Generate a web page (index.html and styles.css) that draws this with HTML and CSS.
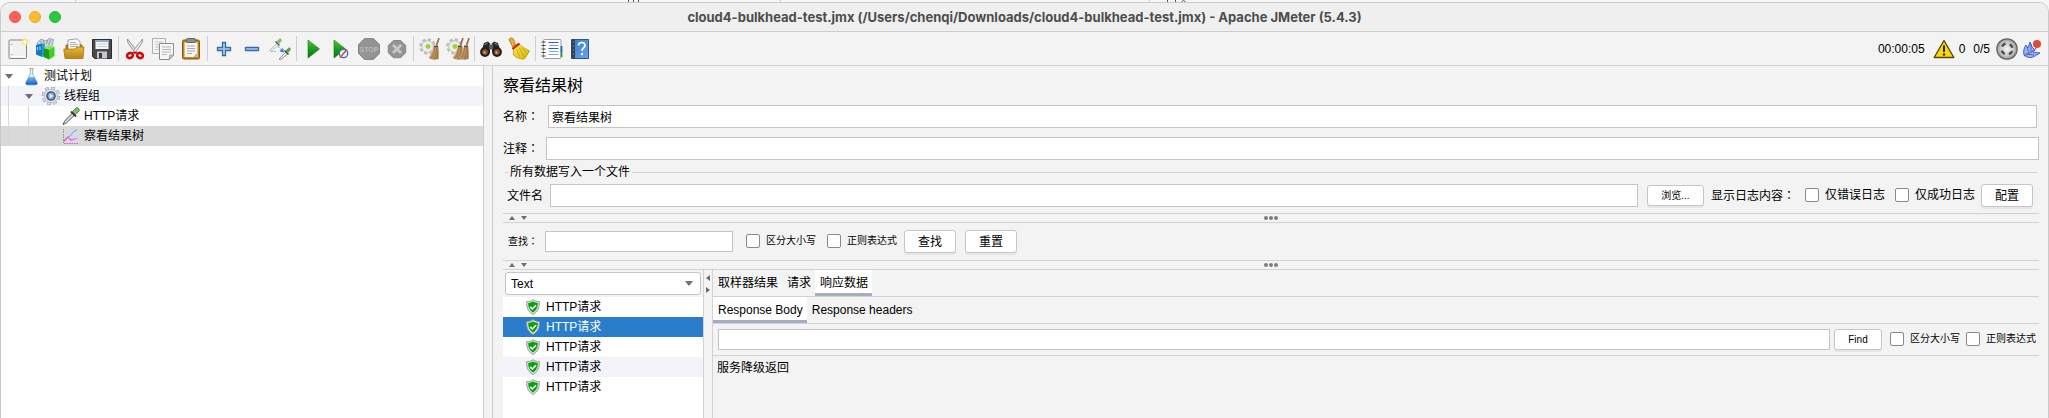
FILE: index.html
```html
<!DOCTYPE html>
<html lang="zh-CN">
<head>
<meta charset="utf-8">
<title>Apache JMeter (5.4.3)</title>
<link rel="stylesheet" href="styles.css">
</head>
<body>
<svg class="symbols" aria-hidden="true">
  <defs>
    <linearGradient id="gGreen" x1="0" y1="0" x2="0" y2="1"><stop offset="0" stop-color="#5fc648"/><stop offset=".5" stop-color="#1e9a1c"/><stop offset="1" stop-color="#0a7a10"/></linearGradient>
    <linearGradient id="gGold" x1="0" y1="0" x2="0" y2="1"><stop offset="0" stop-color="#e6b93a"/><stop offset="1" stop-color="#b98412"/></linearGradient>
    <linearGradient id="gBook" x1="0" y1="0" x2="1" y2="1"><stop offset="0" stop-color="#3a78c8"/><stop offset="1" stop-color="#6aa5ee"/></linearGradient>
    <linearGradient id="gFlask" x1="0" y1="0" x2="0" y2="1"><stop offset="0" stop-color="#7db8f4"/><stop offset="1" stop-color="#0b5fd2"/></linearGradient>
    <radialGradient id="gMetal"><stop offset="0" stop-color="#f4f4f4"/><stop offset=".7" stop-color="#c4c4c4"/><stop offset="1" stop-color="#8d8d8d"/></radialGradient>
    <linearGradient id="gStraw" x1="0" y1="0" x2="1" y2="1"><stop offset="0" stop-color="#d9b583"/><stop offset="1" stop-color="#a87a48"/></linearGradient>
    <linearGradient id="gYellow" x1="0" y1="0" x2="1" y2="1"><stop offset="0" stop-color="#ffe95a"/><stop offset="1" stop-color="#d9b400"/></linearGradient>
  </defs>
  <symbol id="i-shield" viewBox="0 0 16 16">
    <path d="M8 .6C6.300 2 4 2.700 1.600 2.700 1.400 8.500 3 12.800 8 15.500c5-2.700 6.600-7 6.400-12.800C12 2.700 9.700 2 8 .6z" fill="#d9d9d9" stroke="#969696" stroke-width=".9"/>
    <path d="M8 2.600C6.700 3.500 5 4 3.200 4.100 3.200 8.500 4.500 11.500 8 13.600c3.500-2.100 4.800-5.100 4.800-9.500C11 4 9.300 3.500 8 2.600z" fill="#07a30b"/>
    <path d="M5.200 7.900l2.100 2.100 3.700-3.800" fill="none" stroke="#fff" stroke-width="1.500"/>
  </symbol>
  <symbol id="i-dropper" viewBox="0 0 20 20">
    <path d="M2 18.500c1-2.500 2-4 3.500-5.500L12 6.500l2 2L7.500 15C6 16.500 4.500 17.500 2 18.500z" fill="#d3d8d5" stroke="#4e5a52" stroke-width="1"/>
    <path d="M10 5.500l5 5" stroke="#34413a" stroke-width="2"/>
    <path d="M11.500 5.500L15 2c1.500-1.300 4.300 1.200 3 3l-3.500 3.500z" fill="#7fbf6f" stroke="#43803b" stroke-width=".9"/>
  </symbol>
  <symbol id="i-gear" viewBox="0 0 20 20">
    <circle cx="10" cy="10" r="7.800" fill="none" stroke="#9a9da2" stroke-width="3" stroke-dasharray="3.700 2.426"/>
    <circle cx="10" cy="10" r="7.600" fill="none" stroke="#dfe1e4" stroke-width="2.200" stroke-dasharray="2.700 3.269" stroke-dashoffset="-.5"/>
    <circle cx="10" cy="10" r="6.800" fill="#e4e6e9" stroke="#a5a8ad" stroke-width=".7"/>
    <circle cx="10" cy="10" r="4.100" fill="#86a3d2" stroke="#31548e" stroke-width="1.400"/>
    <path d="M8.800 7.800l3.400 2.200-3.400 2.200z" fill="#fff"/>
  </symbol>
  <symbol id="i-straw" viewBox="0 0 12 22">
    <path d="M11 0L8.500 7.500" stroke="#8c6a44" stroke-width="1.600"/>
    <path d="M6 7.500l4 .5c.8 5 .8 9 .5 13-3.500 1.200-7 .8-10-1C3.500 16.500 5 12 6 7.500z" fill="url(#gStraw)"/>
    <path d="M7 9c-.7 5-2 8.500-4 11.500M8.500 9c0 5-.8 8.500-2 12M9.800 9c.3 5 0 8-.4 12" fill="none" stroke="#8a6236" stroke-width=".6"/>
    <path d="M6 8.300h4" stroke="#5d4526" stroke-width="1.200"/>
  </symbol>
  <symbol id="i-cog" viewBox="0 0 16 16">
    <circle cx="8" cy="8" r="6.300" fill="none" stroke="#bdbdbd" stroke-width="3" stroke-dasharray="3 1.950"/>
    <circle cx="8" cy="8" r="5.500" fill="#ececec" stroke="#b5b5b5" stroke-width=".7"/>
    <circle cx="8.500" cy="8" r="2.300" fill="#9ad62c"/>
  </symbol>
</svg>

<svg class="backdrop" width="1200" height="2" aria-hidden="true">
  <path d="M75.500 0v2M780.500 0v2M1149.500 0v2" stroke="#cfcfcf"/>
  <path d="M628.500 0v2M633.500 0v2M638.500 0v2M1167.500 0v2M1175.500 0v2" stroke="#555"/>
  <path d="M1182 2c0-2 3-2 3 0" fill="none" stroke="#555"/>
</svg>

<div class="window">
  <header class="titlebar">
    <div class="lights"><span class="light close"></span><span class="light minimise"></span><span class="light zoom"></span></div>
    <h1 class="title">cloud4-bulkhead-test.jmx (/Users/chenqi/Downloads/cloud4-bulkhead-test.jmx) - Apache JMeter (5.4.3)</h1>
  </header>

  <div class="toolbar" role="toolbar">
    <button class="tool" aria-label="New"><svg viewBox="0 0 24 24"><rect x="3" y="3" width="17.500" height="18.500" rx="1" fill="#f0f1f1" stroke="#858585"/><path d="M5.500 5.500v14M4 19.500h15" stroke="#fff"/><circle cx="5.700" cy="7.500" r=".7" fill="#999"/><circle cx="5.700" cy="17.500" r=".7" fill="#999"/><circle cx="19" cy="5" r="3.600" fill="#f4ee7a" opacity=".8"/><circle cx="19" cy="5" r="1.700" fill="#fffef0"/></svg></button>
    <button class="tool" aria-label="Templates"><svg viewBox="0 0 24 24"><path d="M3 6l4-4 5 2 3-2.500 4.500 1L18 9 6 14z" fill="#cfd6da" stroke="#8c979d" stroke-width=".8"/><path d="M6 3.500l2 4M9 3l1.500 4M13.500 3l-1 4M16.500 3l-2 5" stroke="#7b8990" stroke-width=".8"/><path d="M2 8l6-1.500V20L2 17.500z" fill="#1377c2"/><path d="M3.500 10v3.500M6 9.500v3.500" stroke="#8fd0f7" stroke-width="1.200"/><path d="M8 6.500l3 .5v12l-3 1z" fill="#23a1e4"/><path d="M9.500 11l5.500 1.500V22.500L9.500 20z" fill="#1a9a12"/><path d="M9.500 11l5.500-2.500 5.500 1.200L15 12.500z" fill="#8de45c"/><path d="M15 12.500l5.500-2.800v9L15 22.500z" fill="#3bd11d"/><path d="M20.500 18.500l3-.5-7 4.500H15z" fill="#b9b9b9" opacity=".6"/></svg></button>
    <button class="tool" aria-label="Open"><svg viewBox="0 0 24 24"><path d="M3.500 21V8.500L5 7h14l1.500 1.500V21z" fill="#a8780f"/><path d="M6 3l9-1.200 3 2.500V14H6z" fill="#fafafa" stroke="#8d8d8d" stroke-width=".8"/><path d="M8 5.500h6M8 7.500h8M8 9.500h8" stroke="#a5a5a5" stroke-width=".9"/><path d="M1.800 12h11l2-2h7.200l-1 11.500H3z" fill="url(#gGold)" stroke="#a5760f" stroke-width=".8"/></svg></button>
    <button class="tool" aria-label="Save"><svg viewBox="0 0 24 24"><path d="M2.500 2.500h19v19H4.500l-2-2z" fill="#4a4a4e" stroke="#2d2d30"/><path d="M5.500 3h13v9h-13z" fill="#f2f6f7"/><path d="M5.500 3h13v2h-13z" fill="#85b3cb"/><path d="M7.500 7h9M7.500 9.500h9" stroke="#c2cdd2"/><path d="M7 14.500h10v7H7z" fill="#c9c9c9"/><path d="M9 16h3v5H9z" fill="#3a3a3d"/></svg></button>
    <span class="sep"></span>
    <button class="tool" aria-label="Cut"><svg viewBox="0 0 24 24"><path d="M4.500 2c-.5 2 .5 4 2 6l5.500 8 1.500-2.500z" fill="#e4e4e4" stroke="#7b7b7b" stroke-width=".8"/><path d="M19.500 2c.5 2-.5 4-2 6L12 16l-1.500-2.500z" fill="#f4f4f4" stroke="#7b7b7b" stroke-width=".8"/><ellipse cx="7" cy="18.500" rx="3" ry="2.500" fill="none" stroke="#c80e0e" stroke-width="2.600" transform="rotate(-25 7 18.500)"/><ellipse cx="17" cy="18.500" rx="3" ry="2.500" fill="none" stroke="#c80e0e" stroke-width="2.600" transform="rotate(25 17 18.500)"/><path d="M9 15.500l3-1 3 1-3 1.500z" fill="#c80e0e"/></svg></button>
    <button class="tool" aria-label="Copy"><svg viewBox="0 0 24 24"><path d="M1.500 1.500h13v15h-13z" fill="#f4f4f4" stroke="#b0b0b0"/><path d="M4 5h8M4 7.500h8M4 10h6M4 12.500h4" stroke="#c6c6c6"/><path d="M8.500 6.500h14V18l-4 4.500h-10z" fill="#f6f6f6" stroke="#8c8c8c"/><path d="M11 10h9M11 12.500h9M11 15h9M11 17.500h5" stroke="#b5b5b5"/><path d="M22.500 18h-4v4.500z" fill="#cfcfcf" stroke="#8c8c8c" stroke-width=".7"/></svg></button>
    <button class="tool" aria-label="Paste"><svg viewBox="0 0 24 24"><rect x="3.500" y="3" width="17" height="19" rx="1.500" fill="#c08417" stroke="#87570a"/><path d="M5.500 5.500h13V20h-13z" fill="#f5f5f3"/><path d="M18.500 15.500V20h-4.500z" fill="#b9b9b5"/><rect x="7.500" y="1.500" width="9" height="4" rx="1" fill="#8d8d86" stroke="#55554f" stroke-width=".8"/><path d="M8 9h8M8 11.500h8M8 14h8M8 16.500h5" stroke="#a9a9a9"/></svg></button>
    <span class="sep"></span>
    <button class="tool" aria-label="Expand all"><svg viewBox="0 0 24 24"><path d="M10.500 5.500h3v5H18.500v3H13.500V18.500h-3V13.500H5.500v-3H10.500z" fill="#a9cbf2" stroke="#3769ad" stroke-width="1.300"/></svg></button>
    <button class="tool" aria-label="Collapse all"><svg viewBox="0 0 24 24"><path d="M5.500 10.500h13v3h-13z" fill="#a9cbf2" stroke="#3769ad" stroke-width="1.300"/></svg></button>
    <button class="tool" aria-label="Toggle"><svg viewBox="0 0 24 24"><g opacity=".55"><path d="M1.500 13.500L9 6l1.800 1.800L3.500 14z" fill="#e8ebe8" stroke="#77857a" stroke-width=".8"/></g><path d="M7.500 4.500l4 4" stroke="#4c6550" stroke-width="1.500"/><path d="M8.500 4.500l2.700-2.600c1.500-1 3.300.8 2.300 2.300l-2.600 2.700z" fill="#7fbf6f"/><path d="M3 14.500h6M10 9.500l4.500 4.500" stroke="#86b4ea" stroke-width="1.200" stroke-dasharray="2 1"/><path d="M16 15.500l-4.500-1 3.500-3.500z" fill="#2f7be0"/><path d="M11 22l7.500-7.500 1.800 1.800L13 22.500z" fill="#e8ebe8" stroke="#77857a" stroke-width=".8"/><path d="M16.500 13.500l4 4" stroke="#33503a" stroke-width="1.500"/><path d="M17.500 13.500l2.700-2.600c1.500-1 3.300.8 2.300 2.300l-2.600 2.700z" fill="#5ea04f"/></svg></button>
    <span class="sep"></span>
    <button class="tool" aria-label="Start"><svg viewBox="0 0 24 24"><path d="M7 3l11.500 9L7 21z" fill="url(#gGreen)" stroke="#11770f" stroke-width=".6"/></svg></button>
    <button class="tool" aria-label="Start no pauses"><svg viewBox="0 0 24 24"><path d="M5 3l11.500 9L5 21z" fill="url(#gGreen)" stroke="#11770f" stroke-width=".6"/><circle cx="14.500" cy="16.500" r="4.200" fill="#e4edf8" stroke="#3a70b6" stroke-width="1.300"/><path d="M11 20.500l7-8" stroke="#d04a35" stroke-width="1.300"/></svg></button>
    <button class="tool" aria-label="Stop" disabled><svg viewBox="0 0 24 24"><path d="M7.500 1.500h9l6 6v9l-6 6h-9l-6-6v-9z" fill="#949494" stroke="#888"/><text x="12" y="15" class="stop-word">STOP</text></svg></button>
    <button class="tool" aria-label="Shutdown" disabled><svg viewBox="0 0 24 24"><path d="M8.300 3.500h7.400l5 5v7.200l-5 5H8.300l-5-5V8.500z" fill="#949494" stroke="#888"/><path d="M8 8l8 8M16 8l-8 8" stroke="#c9c9c9" stroke-width="2.600"/></svg></button>
    <span class="sep"></span>
    <button class="tool" aria-label="Clear"><svg viewBox="0 0 24 24"><use href="#i-cog" x="1" y="1" width="17" height="17"/><use href="#i-straw" x="10" y="1" width="12" height="22"/></svg></button>
    <button class="tool" aria-label="Clear all"><svg viewBox="0 0 24 24"><use href="#i-cog" x="0" y="1" width="17" height="17"/><use href="#i-straw" x="6" y="1" width="12" height="22"/><use href="#i-straw" x="12" y="1" width="12" height="22"/></svg></button>
    <span class="sep"></span>
    <button class="tool" aria-label="Search"><svg viewBox="0 0 24 24"><path d="M5 6l4-1.500 2 2v9H2z" fill="#26282b"/><path d="M19 6l-4-1.500-2 2v9h9z" fill="#26282b"/><path d="M10 7.500h4v5h-4z" fill="#595c60"/><circle cx="6" cy="15" r="4.900" fill="#1e1f21"/><circle cx="18" cy="15" r="4.900" fill="#1e1f21"/><circle cx="6" cy="15" r="2.900" fill="#8a4a25"/><circle cx="18" cy="15" r="2.900" fill="#8a4a25"/><circle cx="5.500" cy="15.500" r="1.200" fill="#e0a070"/><circle cx="17.500" cy="15.500" r="1.200" fill="#e0a070"/><path d="M5.500 7.500l3-1.200M15.500 6.300l3 1.200" stroke="#8b8e92"/></svg></button>
    <button class="tool" aria-label="Clear search"><svg viewBox="0 0 24 24"><path d="M2 2.500c1-2 4-2 4.500 0L8.500 8l-3 1.500z" fill="#e9b23c" stroke="#9a6a12" stroke-width=".8"/><path d="M5.500 10.500L11 6.500c3.500 3 7 5 11.500 7.500L17.500 22c-4 .5-8.500-1-11.500-4.500 1-2 .8-4.500-.5-7z" fill="url(#gYellow)" stroke="#a98c06" stroke-width=".7"/><path d="M9.500 12l3.500 8M12 10.500l5 9.500M14.500 11l6 6" stroke="#b39206" stroke-width=".6"/><path d="M5.500 12l7-5.500" stroke="#cf1d12" stroke-width="2.200"/></svg></button>
    <span class="sep"></span>
    <button class="tool" aria-label="Function helper"><svg viewBox="0 0 24 24"><rect x="3.500" y="2.500" width="17.500" height="19" rx="1" fill="#fbfbfb" stroke="#9e9e9e"/><path d="M1.500 5h4M1.500 8.500h4M1.500 12h4M1.500 15.500h4M1.500 19h4" stroke="#444" stroke-width="1.200"/><path d="M8.500 5.500h10M8.500 11.500h10" stroke="#2f62b5"/><path d="M9.500 8.500h9M9.500 14.500h9M8.500 17.500h10" stroke="#86a6dc"/><path d="M21.500 9v6" stroke="#2b5fc0" stroke-width="1.800"/><path d="M21.500 15v5" stroke="#2a9b2e" stroke-width="1.800"/></svg></button>
    <button class="tool" aria-label="Help"><svg viewBox="0 0 24 24"><path d="M3.500 2.500h17v19h-17z" fill="url(#gBook)" stroke="#2d558f"/><path d="M3.500 2.500H7v19H3.500z" fill="#33404f"/><path d="M5 5h1M5 9h1M5 13h1M5 17h1" stroke="#8ca0b8"/><path d="M10.500 8.500c0-4 6.500-4 6.500 0 0 2.500-3 2.500-3 5.500" fill="none" stroke="#fff" stroke-width="1.700"/><circle cx="14" cy="17" r="1.200" fill="#fff"/></svg></button>

    <div class="status">
      <span class="elapsed">00:00:05</span>
      <button class="warn" aria-label="Log errors"><svg width="22" height="20" viewBox="0 0 22 20"><path d="M11 1.500L20.800 18.500H1.200z" fill="#fbd709" stroke="#57490a" stroke-width="1.400" stroke-linejoin="round"/><path d="M11 6.500v6.500" stroke="#2b2503" stroke-width="2"/><circle cx="11" cy="15.500" r="1.200" fill="#2b2503"/></svg><span>0</span></button>
      <span class="threads">0/5</span>
      <svg class="remote" viewBox="0 0 22 22"><circle cx="11" cy="11" r="10.200" fill="url(#gMetal)" stroke="#666" stroke-width="1.200"/><circle cx="11" cy="11" r="5.500" fill="none" stroke="#4a4a4a" stroke-width="2.400" stroke-dasharray="4.300 4.340" stroke-dashoffset="-2.170"/></svg>
      <svg class="feather" viewBox="0 0 20 20"><path d="M2 16c-1-4 0-7 2-10l2 3 2-6 2 5 3 3-2 2 7 1-5 3c-3 2-7 2.500-11-1z" fill="#8fb4ec" stroke="#2c5cc4" stroke-width=".9"/><path d="M2 17c4-2 8-4 12-8M5 8l2 6M4 15l8 1M9 5v7" fill="none" stroke="#3e56c0" stroke-width=".8"/><path d="M1.500 15.500c5-.5 9-2.500 13-6" fill="none" stroke="#cf5583" stroke-width=".8"/><circle cx="15" cy="5" r="4" fill="#dd4a34"/></svg>
    </div>
  </div>

  <div class="main">
    <nav class="tree">
      <div class="node"><span class="slot"><i class="tri-down"></i></span><svg class="node-icon" viewBox="0 0 20 20"><path d="M8.500 2.500h4M9.300 2.500V8L5 16.500c-.5 1.500.3 2.500 1.500 2.500h8c1.200 0 2-1 1.500-2.500L11.700 8V2.500" fill="#eef3f8" stroke="#9aa5b0" stroke-width=".9"/><path d="M7.500 11h6l2.800 5.800c.3 1-.3 2-1.300 2H6c-1 0-1.600-1-1.300-2z" fill="url(#gFlask)"/></svg><span>测试计划</span></div>
      <div class="node alt"><span class="guide"></span><span class="slot"><i class="tri-down"></i></span><svg class="node-icon"><use href="#i-gear"/></svg><span>线程组</span></div>
      <div class="node"><span class="guide"></span><span class="guide"></span><span class="slot"></span><svg class="node-icon"><use href="#i-dropper"/></svg><span>HTTP请求</span></div>
      <div class="node current"><span class="guide"></span><span class="guide"></span><span class="slot"></span><svg class="node-icon" viewBox="0 0 20 20"><path d="M2.500 3v14.500H18" fill="none" stroke="#8d8d8d" stroke-dasharray="1.500 1"/><path d="M3 15l4-4 3 2 6-5v9H3z" fill="#f3c9f0"/><path d="M3 15l4-4 3 3 6-2" fill="none" stroke="#d95bc8" stroke-width="1.300"/><path d="M5 13c4-1 5-7 8-8l3-1v8c-4 2-7-1-11 1z" fill="#c9dcf5" opacity=".8"/><path d="M6 12c4-1 5-7 10-8" fill="none" stroke="#6f9fde"/></svg><span>察看结果树</span></div>
    </nav>
    <div class="gutter"></div>

    <main class="panel">
      <h2 class="heading">察看结果树</h2>
      <div class="field name"><label for="name">名称<span class="colon" lang="zh-TW">：</span></label><input id="name" type="text" value="察看结果树"></div>
      <div class="field comment"><label for="comment">注释<span class="colon" lang="zh-TW">：</span></label><input id="comment" type="text"></div>

      <fieldset class="file">
        <legend>所有数据写入一个文件</legend>
        <div class="file-row">
          <label class="file-label" for="file">文件名</label>
          <input class="file-input" id="file" type="text">
          <button class="btn browse small">浏览...</button>
          <span class="log-label">显示日志内容<span class="colon" lang="zh-TW">：</span></span>
          <label class="check"><input type="checkbox">仅错误日志</label>
          <label class="check"><input type="checkbox">仅成功日志</label>
          <button class="btn configure">配置</button>
        </div>
      </fieldset>

      <div class="split-h"><i class="tri-up"></i><i class="tri-dn"></i><span class="dots"><i></i><i></i><i></i></span></div>

      <div class="search small">
        <label for="query">查找<span class="colon" lang="zh-TW">：</span></label>
        <input class="query" id="query" type="text">
        <label class="check first"><input type="checkbox">区分大小写</label>
        <label class="check second"><input type="checkbox">正则表达式</label>
        <button class="btn find">查找</button>
        <button class="btn reset">重置</button>
      </div>

      <div class="split-h"><i class="tri-up"></i><i class="tri-dn"></i><span class="dots"><i></i><i></i><i></i></span></div>

      <div class="results">
        <section class="samples">
          <div class="combo"><select aria-label="Renderer"><option>Text</option></select><i class="tri-down"></i></div>
          <ul class="list">
            <li><svg><use href="#i-shield"/></svg>HTTP请求</li>
            <li class="selected"><svg><use href="#i-shield"/></svg>HTTP请求</li>
            <li><svg><use href="#i-shield"/></svg>HTTP请求</li>
            <li class="alt"><svg><use href="#i-shield"/></svg>HTTP请求</li>
            <li><svg><use href="#i-shield"/></svg>HTTP请求</li>
          </ul>
        </section>
        <div class="split-v"><i class="tri-left"></i><i class="tri-right"></i></div>
        <section class="detail">
          <div class="tabs" role="tablist">
            <button class="tab" role="tab">取样器结果</button>
            <button class="tab" role="tab">请求</button>
            <button class="tab active" role="tab" aria-selected="true">响应数据</button>
          </div>
          <div class="tabs" role="tablist">
            <button class="tab active" role="tab" aria-selected="true">Response Body</button>
            <button class="tab" role="tab">Response headers</button>
          </div>
          <div class="body-find small">
            <input class="body-query" type="text" aria-label="Find in body">
            <button class="btn body-btn small">Find</button>
            <label class="check"><input type="checkbox">区分大小写</label>
            <label class="check"><input type="checkbox">正则表达式</label>
          </div>
          <div class="response">服务降级返回</div>
        </section>
      </div>
    </main>
  </div>
</div>
</body>
</html>
```
FILE: styles.css
```css
* { box-sizing: border-box; }

body {
  margin: 0;
  height: 100vh;
  padding-top: 2px;
  display: flex;
  overflow: hidden;
  background: #f6f6f6;
  color: #000;
  font: 12px/16px "Liberation Sans", "Noto Sans CJK SC", sans-serif;
}

button, input, select { font: inherit; color: inherit; margin: 0; }
button { padding: 0; border: 0; background: none; }
svg { display: block; flex: none; }
.symbols { position: absolute; width: 0; height: 0; }
.backdrop { position: absolute; top: 0; left: 0; }

.window {
  flex: 1;
  min-width: 0;
  display: flex;
  flex-direction: column;
  border: 1px solid #cacaca;
  border-bottom: 0;
  border-radius: 10px 10px 0 0;
  background: #f3f3f3;
  overflow: hidden;
}

/* Title bar */
.titlebar {
  flex: none;
  display: grid;
  grid-template-columns: 1fr auto 1fr;
  align-items: center;
  height: 29px;
  background: #efefef;
  border-bottom: 1px solid #cdcdcd;
}
.lights { display: flex; gap: 8px; padding-left: 8px; }
.light { width: 12px; height: 12px; border-radius: 50%; }
.close { background: #fe5f57; border: 1px solid #e9544c; }
.minimise { background: #febb2f; border: 1px solid #e8a92b; }
.zoom { background: #28c840; border: 1px solid #27b63b; }
.title { margin: 0; font: bold 13px/20px Inter, sans-serif; color: #4d4d4d; white-space: nowrap; }

/* Toolbar */
.toolbar {
  flex: none;
  display: flex;
  align-items: center;
  height: 34px;
  padding: 0 6px 0 3px;
  border-bottom: 1px solid #d2d2d2;
}
.tool { width: 28px; height: 28px; display: grid; place-items: center; }
.tool svg { width: 24px; height: 24px; }
.stop-word { font: bold 7px "Liberation Sans", sans-serif; fill: #b8b8b8; text-anchor: middle; }
.sep { width: 1px; height: 25px; margin: 0 2px; background: #cfcfcf; }
.status { margin-left: auto; display: flex; align-items: center; }
.elapsed { margin-right: 8px; }
.warn { display: flex; align-items: center; gap: 4px; margin-right: 8px; }
.threads { margin-right: 6px; }
.remote { width: 22px; height: 22px; margin-right: 4px; }
.feather { width: 20px; height: 20px; }

/* Test plan tree */
.main { flex: 1; min-height: 0; display: flex; }
.tree { flex: none; width: 483px; background: #fff; border-right: 1px solid #cdcdcd; }
.node { display: flex; align-items: center; height: 20px; white-space: nowrap; }
.alt { background: #f3f4f9; }
.current { background: #d9d9d9; }
.guide { width: 20px; height: 20px; padding-left: 7px; }
.guide::before { content: ""; display: block; width: 1px; height: 20px; background: #d6d6d6; }
.slot { width: 20px; padding-left: 4px; }
.node-icon { width: 20px; height: 20px; margin-right: 3px; }
.tri-down { display: block; width: 8px; border: 4px solid transparent; border-top: 5px solid #6e6e6e; border-bottom: 0; }
.gutter { flex: none; width: 9px; border-right: 1px solid #cdcdcd; }

/* Listener panel */
.panel { flex: 1; min-width: 0; display: flex; flex-direction: column; padding: 8px 9px 0 10px; }
.heading { margin: 0 0 7px; font-size: 16px; font-weight: normal; line-height: 24px; }
.colon { font-family: "Noto Sans CJK TC", sans-serif; }

input[type="text"] {
  min-width: 0;
  height: 23px;
  padding: 0 3px;
  border: 1px solid #c4c4c4;
  border-radius: 0;
  background: #fff;
}
input[type="checkbox"] {
  appearance: none;
  flex: none;
  width: 14px;
  height: 14px;
  margin: 0;
  border: 1px solid #898989;
  border-radius: 2px;
  background: #fff;
}
.check { display: flex; align-items: center; gap: 6px; white-space: nowrap; padding-bottom: 2px; }
.small { font-size: 10px; }

.btn {
  flex: none;
  width: 52px;
  height: 23px;
  border: 1px solid #c6c6c6;
  border-radius: 3px;
  background: #fff;
  box-shadow: 0 2px 0 #e6e6e6;
  font-size: 12px;
}
.btn.small { height: 21px; font-size: 10px; }

.field { display: flex; align-items: center; }
.field label { flex: none; }
.field input { flex: 1; }
.name { gap: 9px; margin: 0 2px 9px 0; }
.comment { gap: 7px; }

.file { min-width: 0; margin: 4px 2px 0; padding: 4px 4px 6px 2px; border: 0 solid #d2d2d2; border-top-width: 1px; }
.file legend { margin-left: 1px; padding: 0 2px; line-height: 16px; }
.file-row { display: flex; align-items: center; white-space: nowrap; }
.file-input { flex: 1; margin: 0 9px 0 7px; }
.btn.browse { width: 57px; margin-right: 7px; }
.log-label { margin-right: 10px; }
.file-row .check { margin-right: 10px; }
.file-row .check + .check { margin-right: 6px; }

.split-h {
  flex: none;
  position: relative;
  display: flex;
  align-items: center;
  gap: 6px;
  height: 10px;
  padding-left: 6px;
  border: 1px solid #d2d2d2;
  border-width: 1px 0;
}
.tri-up { border: 3px solid transparent; border-bottom: 4px solid #6e6e6e; border-top: 0; }
.tri-dn { border: 3px solid transparent; border-top: 4px solid #6e6e6e; border-bottom: 0; }
.dots { position: absolute; inset: 0; display: flex; align-items: center; justify-content: center; gap: 1px; }
.dots i { width: 4px; height: 4px; border-radius: 50%; background: #7d7d7d; }

.search { flex: none; display: flex; align-items: center; height: 37px; padding-left: 5px; }
.search .query, .body-find .body-query { height: 21px; }
.query { width: 188px; margin: 0 13px 0 7px; }
.first { margin-right: 11px; }
.second { margin-right: 7px; }
.find { margin-right: 9px; }

/* Results */
.results { flex: 1; min-height: 0; display: flex; }
.samples { flex: none; width: 200px; display: flex; flex-direction: column; }
.combo { position: relative; margin: 2px; }
.combo select {
  display: block;
  appearance: none;
  width: 100%;
  height: 23px;
  padding: 0 5px;
  border: 1px solid #c4c4c4;
  border-radius: 3px;
  background: #fff;
}
.combo .tri-down { position: absolute; right: 8px; top: 9px; pointer-events: none; }
.list { flex: 1; margin: 0; padding: 0; list-style: none; background: #fff; }
.list li { display: flex; align-items: center; gap: 5px; height: 20px; padding-left: 22px; }
.list svg { width: 16px; height: 16px; }
.selected { background: #2a7dcb; color: #fff; }

.split-v {
  flex: none;
  display: flex;
  flex-direction: column;
  align-items: center;
  gap: 6px;
  width: 10px;
  padding-top: 5px;
  border: 1px solid #d2d2d2;
  border-width: 0 1px;
}
.tri-left { border: 3px solid transparent; border-right: 4px solid #6e6e6e; border-left: 0; }
.tri-right { border: 3px solid transparent; border-left: 4px solid #6e6e6e; border-right: 0; }

.detail { flex: 1; min-width: 0; }
.tabs { display: flex; height: 27px; border-bottom: 1px solid #d2d2d2; }
.tab { height: 26px; padding: 0 4px 0 5px; white-space: nowrap; }
.active { background: #fff; box-shadow: inset 0 -3px #a3afc0; }
.body-find { display: flex; align-items: center; height: 32px; padding: 0 3px 0 5px; border-bottom: 1px solid #d2d2d2; }
.body-query { flex: 1; }
.body-btn { width: 48px; margin: 0 8px 0 4px; }
.body-find .check + .check { margin-left: 6px; }
.response { padding: 4px; }
```
